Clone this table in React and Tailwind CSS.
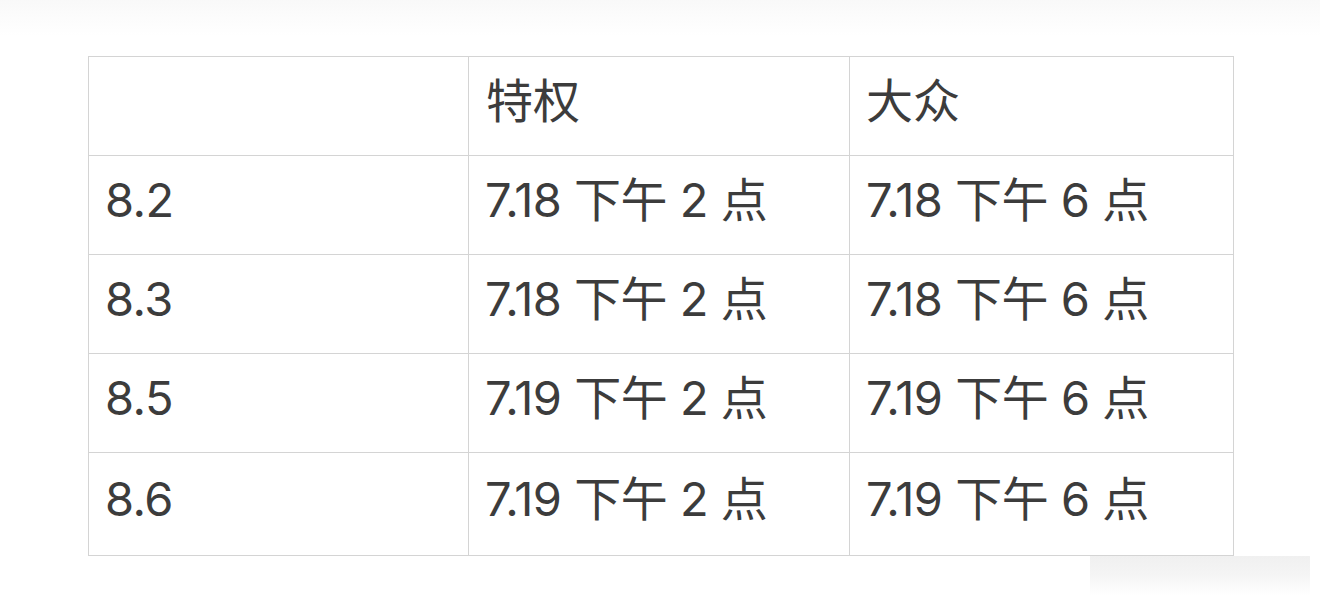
const rows = [
  ["8.2", "7.18 下午 2 点", "7.18 下午 6 点"],
  ["8.3", "7.18 下午 2 点", "7.18 下午 6 点"],
  ["8.5", "7.19 下午 2 点", "7.19 下午 6 点"],
  ["8.6", "7.19 下午 2 点", "7.19 下午 6 点"],
];

export default function App() {
  return (
    <div
      className="relative w-[1320px] h-[610px] overflow-hidden bg-white text-[#3c3c3c]"
      style={{ fontFamily: 'Inter, "Noto Sans CJK SC", sans-serif' }}
    >
      {/* faint top shadow */}
      <div className="absolute left-0 top-0 w-full h-[36px] bg-gradient-to-b from-[#f6f6f6] to-white opacity-70" />
      {/* faint bottom-right smear */}
      <div className="absolute left-[1090px] top-[556px] w-[220px] h-[40px] bg-gradient-to-b from-[#f0f0f0] via-[#f5f5f5] to-white" />

      <div className="relative pt-[56px] pl-[88px]">
        <table className="border-collapse table-fixed w-[1145px]">
          <colgroup>
            <col className="w-[380px]" />
            <col className="w-[381px]" />
            <col className="w-[384px]" />
          </colgroup>
          <tbody>
            <tr className="h-[99px]">
              <td className="border border-[#d4d4d4] px-4" />
              <td className="border border-[#d4d4d4] px-[17px] pb-[12px] text-[47px] leading-none">特权</td>
              <td className="border border-[#d4d4d4] px-[16px] pb-[12px] text-[47px] leading-none">大众</td>
            </tr>
            {rows.map((r, i) => (
              <tr key={i} className={i === rows.length - 1 ? "h-[103px]" : "h-[99px]"}>
                {r.map((c, j) => (
                  <td
                    key={j}
                    className="border border-[#d4d4d4] px-[16px] pb-[12px] text-[47px] leading-none whitespace-nowrap tracking-[-0.5px]"
                  >
                    {c}
                  </td>
                ))}
              </tr>
            ))}
          </tbody>
        </table>
      </div>
    </div>
  );
}
